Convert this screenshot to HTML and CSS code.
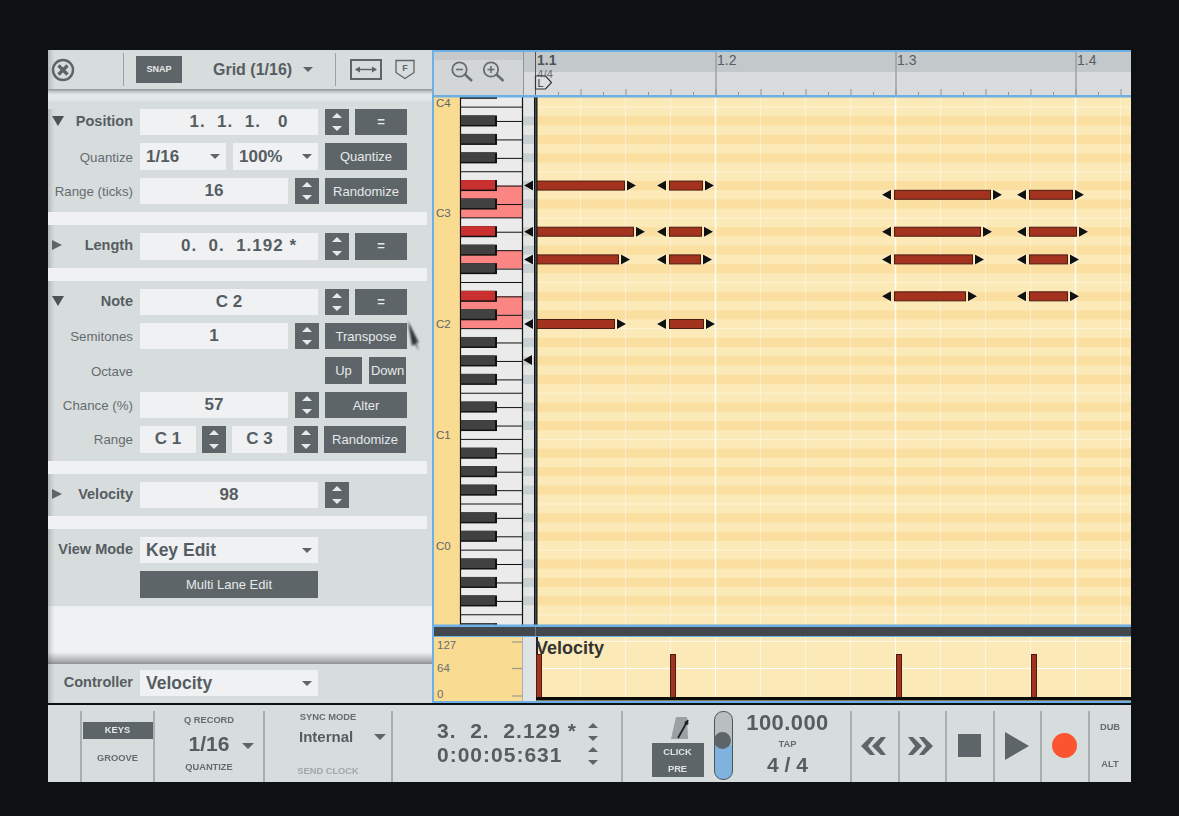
FILE: index.html
```html
<!DOCTYPE html>
<html>
  <head>
    <meta charset="utf-8">
    <title>Piano Roll</title>
    <link rel="stylesheet" href="styles.css">
  </head>
  <body>
    <div class="app">
      <div class="top">
        <div class="panel">
          <div class="bar">
            <svg class="close" width="24" height="24" viewBox="0 0 24 24">
              <circle cx="12" cy="12" r="10" fill="none" stroke="#5d6569" stroke-width="2.4"/>
              <path d="M7.5 7.5l9 9M16.500 7.500l-9 9" stroke="#5d6569" stroke-width="3.4"/>
            </svg>
            <div class="bar-sep"></div>
            <div class="snap">SNAP</div>
            <div class="grid-name">Grid (1/16)</div>
            <i class="arrow"></i>
            <div class="bar-sep second"></div>
            <svg class="fit" width="32" height="21" viewBox="0 0 32 21">
              <rect x="1" y="1" width="30" height="19" fill="none" stroke="#5d6569" stroke-width="2"/>
              <path d="M6 10.500h20" stroke="#5d6569" stroke-width="1.500"/>
              <path d="M5 10.500l5-3v6zM27 10.500l-5-3v6z" fill="#5d6569"/>
            </svg>
            <svg class="shield" width="20" height="21" viewBox="0 0 20 21">
              <path d="M1 1.500h18v12l-9 6-9-6z" fill="none" stroke="#5d6569" stroke-width="1.300"/>
              <text x="10" y="12" class="shield-f">F</text>
            </svg>
          </div>
          <div class="bar-shade"></div>

          <div class="section">
            <div class="row">
              <div class="label strong"><i class="tri-down"></i>Position</div>
              <div class="field wide num ticks">1.  1.  1.   0</div>
              <div class="stepper"></div>
              <div class="btn eq">=</div>
            </div>
            <div class="row">
              <div class="label">Quantize</div>
              <div class="field select w86">1/16<i class="arrow"></i></div>
              <div class="field select w85">100%<i class="arrow"></i></div>
              <div class="btn w82">Quantize</div>
            </div>
            <div class="row">
              <div class="label">Range (ticks)</div>
              <div class="field short num">16</div>
              <div class="stepper"></div>
              <div class="btn w81">Randomize</div>
            </div>
          </div>
          <div class="band"></div>

          <div class="section">
            <div class="row">
              <div class="label strong"><i class="tri-right"></i>Length</div>
              <div class="field wide num ticks">0.  0.  1.192 *</div>
              <div class="stepper"></div>
              <div class="btn eq">=</div>
            </div>
          </div>
          <div class="band"></div>

          <div class="section">
            <div class="row">
              <div class="label strong"><i class="tri-down"></i>Note</div>
              <div class="field wide num">C 2</div>
              <div class="stepper"></div>
              <div class="btn eq">=</div>
            </div>
            <div class="row">
              <div class="label">Semitones</div>
              <div class="field short num">1</div>
              <div class="stepper"></div>
              <div class="btn w81">Transpose</div>
            </div>
            <div class="row">
              <div class="label">Octave</div>
              <div class="blank"></div>
              <div class="btn up">Up</div>
              <div class="btn down">Down</div>
            </div>
            <div class="row">
              <div class="label">Chance (%)</div>
              <div class="field short num">57</div>
              <div class="stepper"></div>
              <div class="btn w81">Alter</div>
            </div>
            <div class="row">
              <div class="label">Range</div>
              <div class="field w56 num">C 1</div>
              <div class="stepper"></div>
              <div class="field w54 num">C 3</div>
              <div class="stepper"></div>
              <div class="btn w81">Randomize</div>
            </div>
          </div>
          <div class="band"></div>

          <div class="section">
            <div class="row">
              <div class="label strong"><i class="tri-right"></i>Velocity</div>
              <div class="field wide num">98</div>
              <div class="stepper"></div>
            </div>
          </div>
          <div class="band"></div>

          <div class="section">
            <div class="row">
              <div class="label strong">View Mode</div>
              <div class="field select wide big">Key Edit<i class="arrow"></i></div>
            </div>
            <div class="row">
              <div class="label"></div>
              <div class="btn wide">Multi Lane Edit</div>
            </div>
          </div>

          <div class="spare"></div>

          <div class="controller">
            <div class="label strong">Controller</div>
            <div class="field select wide big">Velocity<i class="arrow"></i></div>
          </div>
        </div>

        <svg id="roll" class="roll" width="699" height="653" viewBox="432 50 699 653"></svg>
      </div>

      <div class="transport">
        <div class="cell lead"></div>
        <div class="cell modes">
          <div class="keys">KEYS</div>
          <div class="tiny">GROOVE</div>
        </div>
        <div class="cell qrec">
          <div class="tiny">Q RECORD</div>
          <div class="qval">1/16<i class="arrow"></i></div>
          <div class="tiny">QUANTIZE</div>
        </div>
        <div class="cell sync">
          <div class="tiny">SYNC MODE</div>
          <div class="sync-val">Internal<i class="arrow"></i></div>
          <div class="tiny faded">SEND CLOCK</div>
        </div>
        <div class="cell clock">
          <div class="clock-row"><span class="clock-val">3.  2.  2.129 *</span><i class="updown"></i></div>
          <div class="clock-row"><span class="clock-val">0:00:05:631</span><i class="updown"></i></div>
        </div>
        <div class="cell tempo">
          <div class="click">
            <svg width="20" height="24" viewBox="0 0 20 24">
              <path d="M5 1h11l1 22H0z" fill="#9aa0a3"/>
              <path d="M7 22L17 4" stroke="#222" stroke-width="1.800"/>
              <circle cx="15.500" cy="7" r="2" fill="#222"/>
            </svg>
            <div class="click-box"><span>CLICK</span><span>PRE</span></div>
          </div>
          <div class="slider"></div>
          <div class="bpm">
            <div class="bpm-val">100.000</div>
            <div class="tiny">TAP</div>
            <div class="sig">4 / 4</div>
          </div>
        </div>
        <div class="cell key">
          <svg class="rew" width="26" height="18" viewBox="0 0 26 18"><path d="M10 0h5L8 9l7 9h-5L1 9zM21 0h5l-7 9 7 9h-5L12 9z" fill="#5d6569"/></svg>
        </div>
        <div class="cell key">
          <svg class="ffw" width="26" height="18" viewBox="0 0 26 18"><path d="M16 0h-5l7 9-7 9h5l9-9zM5 0H0l7 9-7 9h5l9-9z" fill="#5d6569"/></svg>
        </div>
        <div class="cell key"><div class="stop"></div></div>
        <div class="cell key">
          <svg width="24" height="28" viewBox="0 0 24 28"><path d="M0 0l24 14L0 28z" fill="#5d6569"/></svg>
        </div>
        <div class="cell key"><div class="rec"></div></div>
        <div class="cell dub">
          <div class="tiny">DUB</div>
          <div class="tiny">ALT</div>
        </div>
      </div>

      <svg class="cursor" width="14" height="32" viewBox="0 0 14 32">
        <path d="M1 1l11 22-3-1 3 9-4-7-3 2z" fill="#1f2326"/>
      </svg>
    </div>

    <script src="app.js"></script>
  </body>
</html>
```

FILE: styles.css
```css
html, body {
  margin: 0;
  height: 100%;
  background: #0e1013;
  overflow: hidden;
}

.app {
  position: relative;
  box-sizing: border-box;
  width: 1179px;
  height: 816px;
  padding: 50px 48px 0;
  font-family: "Liberation Sans", Arial, sans-serif;
  color: #565d62;
  filter: blur(.35px);
}

.top {
  display: flex;
  height: 653px;
}

/* left panel */
.panel {
  width: 384px;
  display: flex;
  flex-direction: column;
  background: #d7dcdc;
  box-shadow: inset 6px 0 5px -4px rgba(60, 65, 70, .3);
}

.bar {
  height: 39px;
  display: flex;
  align-items: center;
  flex: none;
}
.close      { margin-left: 3px; }
.bar-sep    { width: 1px; height: 33px; margin-left: 48px; background: #9aa0a3; }
.bar-sep.second { margin-left: 22px; }
.snap {
  width: 46px;
  height: 27px;
  margin-left: 12px;
  background: #5d6569;
  color: #e6e9ea;
  font-size: 9px;
  font-weight: bold;
  line-height: 27px;
  text-align: center;
}
.grid-name  { margin-left: 31px; font-size: 16px; font-weight: bold; }
.bar .arrow { margin-left: 11px; }
.fit        { margin-left: 14px; }
.shield     { margin-left: 13px; }
.shield-f   { font-size: 9px; font-weight: bold; fill: #5d6569; text-anchor: middle; }

.bar-shade {
  height: 20px;
  flex: none;
  background: linear-gradient(#8d9294 0, #c9cdce 3px, #e6e9e9 6px, #e4e7e7 11px, #d7dcdc 13px);
}

.section {
  display: flex;
  flex-direction: column;
  gap: 8px;
  padding: 8px 0;
}
.bar-shade + .section { padding-top: 0; }

.band {
  height: 13px;
  margin-right: 5px;
  flex: none;
  background: #eff1f2;
}

.row {
  display: flex;
  gap: 7px;
  height: 26.4px;
}

.label {
  width: 85px;
  flex: none;
  box-sizing: border-box;
  padding: 1px 0 0 4px;
  display: flex;
  justify-content: flex-end;
  align-items: center;
  font-size: 13.3px;
  white-space: nowrap;
  color: #656c70;
}
.label.strong { font-size: 14.5px; font-weight: bold; color: #565d62; padding: 0 0 2px 4px; }

.tri-down, .tri-right { margin-right: auto; width: 0; height: 0; }
.tri-down  { border: 6px solid transparent; border-top: 10px solid #4c5357; border-bottom: 0; }
.tri-right { border: 5.500px solid transparent; border-left: 10px solid #5d6569; border-right: 0; }

.field {
  flex: none;
  background: #eff1f2;
  font-size: 17px;
  font-weight: bold;
  line-height: 26px;
  white-space: pre;
}
.num   { text-align: center; }
.ticks { letter-spacing: 1px; box-sizing: border-box; padding-left: 20px; }
.wide  { width: 178px; }
.short { width: 148px; }
.w86   { width: 86px; }
.w85   { width: 85px; }
.w82   { width: 82px; }
.w81   { width: 82px; margin-left: -1px; }
.w56   { width: 56px; margin-right: -1px; }
.w54   { width: 55px; margin-left: -1px; }

.select {
  display: flex;
  align-items: center;
  justify-content: space-between;
  box-sizing: border-box;
  padding: 0 6px 0 6px;
}
.big { font-size: 17.500px; }

.arrow {
  display: inline-block;
  width: 0;
  height: 0;
  border: 5px solid transparent;
  border-top: 5px solid #5d6569;
  border-bottom: 0;
}

.stepper {
  width: 24px;
  flex: none;
  background: #5d6569;
  position: relative;
}
.stepper::before, .stepper::after {
  content: "";
  position: absolute;
  left: 7px;
  border: 5px solid transparent;
}
.stepper::before { top: 4px; border-bottom: 5px solid #e6e9ea; border-top: 0; }
.stepper::after  { bottom: 4px; border-top: 5px solid #e6e9ea; border-bottom: 0; }

.btn {
  flex: none;
  background: #5d6569;
  color: #e6e9ea;
  font-size: 13px;
  line-height: 27.500px;
  text-align: center;
}
.eq    { width: 52px; margin-left: -1px; font-weight: bold; line-height: 26px; }
.blank { width: 178px; flex: none; }
.up    { width: 37px; }
.down  { width: 37px; }

.spare {
  flex: 1;
  background: linear-gradient(#eff1f2 0, #eff1f2 46px, #b3b7b8 54px, #8f9394 58px);
  box-shadow: inset 6px 0 5px -4px rgba(60, 65, 70, .35);
}

.controller {
  height: 39px;
  flex: none;
  display: flex;
  gap: 7px;
  align-items: flex-start;
  padding-top: 6px;
  box-sizing: border-box;
}
.controller .label { height: 26px; }
.controller .field { height: 26.400px; }

.roll { display: block; flex: none; }

/* transport */
.transport {
  display: flex;
  height: 77px;
  margin-top: 2px;
  padding-top: 6px;
  box-sizing: border-box;
  background: #d7dcdc;
}

.cell {
  box-sizing: border-box;
  border-left: 2px solid #a9aeb0;
  display: flex;
  flex-direction: column;
  align-items: center;
  flex: none;
}
.lead { width: 32px; border-left: 0; }

.tiny {
  font-size: 9.300px;
  font-weight: bold;
  color: #656c70;
  white-space: nowrap;
}
.faded { color: #a2a7a9; }

.modes { width: 73px; padding-top: 11px; }
.keys {
  width: 70px;
  height: 17px;
  background: #5d6569;
  color: #e6e9ea;
  font-size: 9.300px;
  font-weight: bold;
  line-height: 17px;
  text-align: center;
  margin-bottom: 14px;
}

.qrec { width: 110px; padding-top: 4px; }
.qval {
  font-size: 21px;
  font-weight: bold;
  line-height: 24px;
  margin: 7px 0 6px;
  position: relative;
}
.qval .arrow { position: absolute; left: 53px; top: 11px; border-width: 6px; border-top-width: 6px; }

.sync { width: 128px; padding-top: 1px; }
.sync-val {
  width: 100%;
  box-sizing: border-box;
  padding-left: 34px;
  display: flex;
  justify-content: space-between;
  align-items: center;
  font-size: 15px;
  font-weight: bold;
  line-height: 20px;
  margin: 5px 0 19px;
  padding-right: 5px;
}
.sync-val .arrow { border-width: 6px; border-top-width: 6px; }

.clock { width: 230px; padding-top: 8px; align-items: flex-start; }
.clock-row {
  display: flex;
  align-items: center;
  height: 24px;
  padding-left: 44px;
}
.clock-val {
  width: 151px;
  font-size: 21px;
  font-weight: bold;
  letter-spacing: 1px;
  white-space: pre;
}
.updown { width: 10px; height: 18px; position: relative; margin-top: 2px; }
.updown::before, .updown::after {
  content: "";
  position: absolute;
  left: 0;
  border: 5px solid transparent;
}
.updown::before { top: 0; border-bottom: 5px solid #5d6569; border-top: 0; }
.updown::after  { bottom: 0; border-top: 5px solid #5d6569; border-bottom: 0; }

.tempo {
  width: 229px;
  flex-direction: row;
  align-items: flex-start;
}
.click {
  margin-left: 28.500px;
  display: flex;
  flex-direction: column;
  align-items: center;
  padding-top: 5px;
}
.click svg { margin-left: 6px; margin-bottom: 3px; }
.click-box {
  width: 52px;
  height: 34px;
  background: #5d6569;
  color: #dfe3e4;
  font-size: 9.300px;
  font-weight: bold;
  display: flex;
  flex-direction: column;
  align-items: center;
  justify-content: space-around;
}
.slider {
  position: relative;
  width: 19px;
  height: 69px;
  box-sizing: border-box;
  margin-left: 10px;
  border: 1.500px solid #4d5559;
  border-radius: 9px;
  background: linear-gradient(#b9bfc1 0, #b9bfc1 50%, #7fb2dc 50%);
}
.slider::after {
  content: "";
  position: absolute;
  left: -.5px;
  top: 20px;
  width: 17px;
  height: 17px;
  border-radius: 50%;
  background: #5d6569;
}
.bpm { width: 100px; margin-left: 5px; text-align: center; }
.bpm-val { font-size: 22px; font-weight: bold; line-height: 24px; letter-spacing: .4px; }
.bpm .tiny { margin-top: 4px; }
.sig { font-size: 21px; font-weight: bold; line-height: 26px; margin-top: 3px; white-space: pre; }

.key {
  width: 47.500px;
  justify-content: center;
  padding-bottom: 2px;
}
.rew  { margin-right: 4px; }
.ffw  { margin-right: 2px; }
.stop { width: 23px; height: 23px; background: #5d6569; }
.rec  { width: 25px; height: 25px; border-radius: 50%; background: #fb5430; }

.dub {
  width: 43px;
  justify-content: space-between;
  padding: 11px 0 13px;
}

/* mouse pointer left in the capture */
.cursor {
  position: absolute;
  left: 407px;
  top: 320px;
  filter: blur(.8px);
  opacity: .9;
}
```

FILE: app.js
```js
var h = 9.23,
    top0 = 102.5,
    out = [];

var notes = [
  { n: 9,  bars: [[536, 624], [669, 702]] },
  { n: 10, bars: [[894, 990], [1029, 1072]] },
  { n: 14, bars: [[536, 633], [669, 701], [894, 980], [1029, 1076]] },
  { n: 17, bars: [[536, 618], [669, 700], [894, 972], [1029, 1067]] },
  { n: 21, bars: [[894, 965], [1029, 1067]] },
  { n: 24, bars: [[536, 614], [669, 703]] }
];
var redKeys = [9, 14, 21];
var pinkKeys = [[9, 11], [11, 12.5], [16, 18], [21, 23], [23, 24.5]];

function y(n) { return top0 + n * h; }
function isBlack(n) { return [2, 4, 6, 9, 11].indexOf(((n % 12) + 12) % 12) >= 0; }

function rect(x, yy, w, ht, fill, extra) {
  out.push('<rect x="' + x + '" y="' + yy + '" width="' + w + '" height="' + ht + '" fill="' + fill + '" ' + (extra || "") + '/>');
}
function line(x1, y1, x2, y2, color, width, extra) {
  out.push('<line x1="' + x1 + '" y1="' + y1 + '" x2="' + x2 + '" y2="' + y2 + '" stroke="' + color + '" stroke-width="' + (width || 1) + '" ' + (extra || "") + '/>');
}
function text(x, yy, s, size, color, weight) {
  out.push('<text x="' + x + '" y="' + yy + '" font-size="' + size + '" fill="' + color + '" font-weight="' + (weight || "normal") + '" font-family="Liberation Sans, Arial, sans-serif">' + s + '</text>');
}
// x is the tip of the triangle, dir the way its body runs from there
function arrow(x, yy, dir) {
  var d = "M" + x + " " + yy + "l" + (9 * dir) + " -5v10z";
  out.push('<path d="' + d + '" fill="#111" stroke="#fff" stroke-opacity=".7" stroke-width="1" paint-order="stroke"/>');
}

function drawGrid() {
  rect(522, 97, 609, 530, "#fbeab8");
  for (var n = -1; n < 58; n++) {
    if (isBlack(n)) {
      rect(537, y(n) - h / 2, 594, h, "#fbdfa0");
      rect(523, y(n) - h / 2, 12, h, "#c9d0d3");
    } else {
      rect(523, y(n) - h / 2, 12, h, "#e2e6e7");
    }
    var pc = ((n % 12) + 12) % 12;
    if (pc === 0 || pc === 7) {
      line(537, y(n) + h / 2, 1131, y(n) + h / 2, "#fdf3d6", 1);
    }
  }
  for (var i = 1; i < 14; i++) {
    var x = 535.5 + i * 45;
    if (x > 1131) break;
    line(x, 97, x, 625, "#fff", i % 4 === 0 ? 1.5 : 1, i % 4 === 0 ? 'opacity=".85"' : 'opacity=".4"');
  }
}

function drawPiano() {
  rect(434, 97, 26, 530, "#fadb92");
  rect(460, 97, 62, 530, "#ebebeb");
  pinkKeys.forEach(function(k) {
    rect(460, y(k[0]), 62, (k[1] - k[0]) * h, "#fb8583");
  });
  line(460.5, 97, 460.5, 625, "#111", 1.2);
  line(522.5, 97, 522.5, 625, "#111", 1.2);
  for (var n = -1; n < 58; n++) {
    var pc = ((n % 12) + 12) % 12;
    if (isBlack(n)) {
      line(496, y(n) + .5, 522, y(n) + .5, "#111", 1);
      rect(461, y(n) - 5.5, 36, 11, "#111");
      rect(461, y(n) - 5.5, 34, 9.5, redKeys.indexOf(n) >= 0 ? "#c9302f" : "#414141");
    } else if (pc === 0 || pc === 7) {
      line(460, y(n) + h / 2, 522, y(n) + h / 2, "#111", 1);
    }
  }
  [["C4", 0], ["C3", 12], ["C2", 24], ["C1", 36], ["C0", 48]].forEach(function(l) {
    text(436, y(l[1]) + 4, l[0], 11.5, "#5d6569");
  });
}

function drawNotes() {
  notes.forEach(function(row) {
    row.bars.forEach(function(b) {
      rect(b[0] + .5, y(row.n) - 4.5, b[1] - b[0], 9, "#a3321f", 'stroke="#4a1c12" stroke-width="1"');
      arrow(b[0] - 12, y(row.n), 1);
      arrow(b[1] + 12, y(row.n), -1);
    });
  });
  arrow(523, 360, 1);
}

function drawPlayhead() {
  rect(534, 97, 3.5, 528, "#111");
  rect(535.5, 97, .7, 528, "#888");
}

function drawRuler() {
  rect(434, 52, 90, 43, "#d3d6d7");
  rect(434, 52, 90, 8, "#bdc0c1", 'opacity=".6"');
  rect(524, 52, 607, 20, "#c3c8ca");
  rect(524, 72, 607, 23, "#d8dcdd");
  line(523.5, 52, 523.5, 95, "#8f9596", 1);
  for (var i = 1; i < 27; i++) {
    var x = 536 + i * 22.5;
    line(x, i % 2 ? 92 : 89, x, 95, "#8f9596", 1);
  }
  [716, 896, 1076].forEach(function(x) { line(x, 52, x, 95, "#8f9596", 1.2); });
  text(537, 65, "1.1", 14, "#4d5458", "bold");
  text(717, 65, "1.2", 14, "#565d62");
  text(897, 65, "1.3", 14, "#565d62");
  text(1077, 65, "1.4", 14, "#565d62");
  text(537, 78, "4/4", 11.5, "#666b6e");
  line(535.5, 52, 535.5, 97, "#555", 1);
  out.push('<path d="M535.5 76h10l6 6.500-6 6.500h-10z" fill="#dfe3e4" fill-opacity=".6" stroke="#333" stroke-width="1.200"/>');
  text(537.5, 87, "L", 11, "#333");
  [[459.5, false], [491, true]].forEach(function(z) {
    var cx = z[0], cy = 69.5;
    out.push('<circle cx="' + cx + '" cy="' + cy + '" r="7.200" fill="none" stroke="#666d71" stroke-width="1.800"/>');
    line(cx + 5.5, cy + 5, cx + 12.5, cy + 11.5, "#666d71", 2.4);
    line(cx - 3.5, cy, cx + 3.5, cy, "#666d71", 1.6);
    if (z[1]) line(cx, cy - 3.5, cx, cy + 3.5, "#666d71", 1.6);
  });
}

function drawLane() {
  rect(434, 637, 88, 64, "#fadb92");
  rect(522, 637, 14, 64, "#dfe3e4");
  line(522.5, 637, 522.5, 701, "#a9aeb0", 1);
  rect(536, 637, 595, 64, "#fbeab8");
  line(536, 641.5, 1131, 641.5, "#fff", 1, 'opacity=".7"');
  line(536, 668.5, 1131, 668.5, "#fff", 1);
  for (var i = 1; i < 14; i++) {
    var x = 535.5 + i * 45;
    if (x > 1131) break;
    line(x, 637, x, 697, "#fff", 1, i % 4 === 0 ? 'opacity=".85"' : 'opacity=".5"');
  }
  text(437, 649, "127", 11.5, "#6a6f70");
  text(437, 672, "64", 11.5, "#6a6f70");
  text(437, 698, "0", 11.5, "#6a6f70");
  line(512, 642, 522, 642, "#9a9a90", 1.2);
  line(512, 668.5, 522, 668.5, "#9a9a90", 1.2);
  line(512, 696, 522, 696, "#9a9a90", 1.2);
  [536, 670, 896, 1031].forEach(function(x) {
    rect(x + .5, 654.5, 5, 43, "#a3321f", 'stroke="#4a1c12" stroke-width="1"');
  });
  rect(536, 697, 595, 3.5, "#0c0c0c");
  rect(536, 637, 2, 17, "#222");
  text(536, 654, "Velocity", 18, "#333", "bold");
}

rect(432, 50, 699, 653, "#6cb0e6");
drawGrid();
drawPiano();
drawNotes();
drawPlayhead();
drawRuler();
rect(434, 95, 697, 2.5, "#6cb0e6");
rect(434, 624.5, 697, 3, "#6cb0e6");
rect(434, 627, 697, 9, "#43484c");
line(535.5, 627, 535.5, 636, "#777", 1);
rect(434, 636, 697, 1, "#6cb0e6");
drawLane();
rect(432, 701, 699, 2, "#6cb0e6");

document.getElementById("roll").innerHTML = out.join("");
```
